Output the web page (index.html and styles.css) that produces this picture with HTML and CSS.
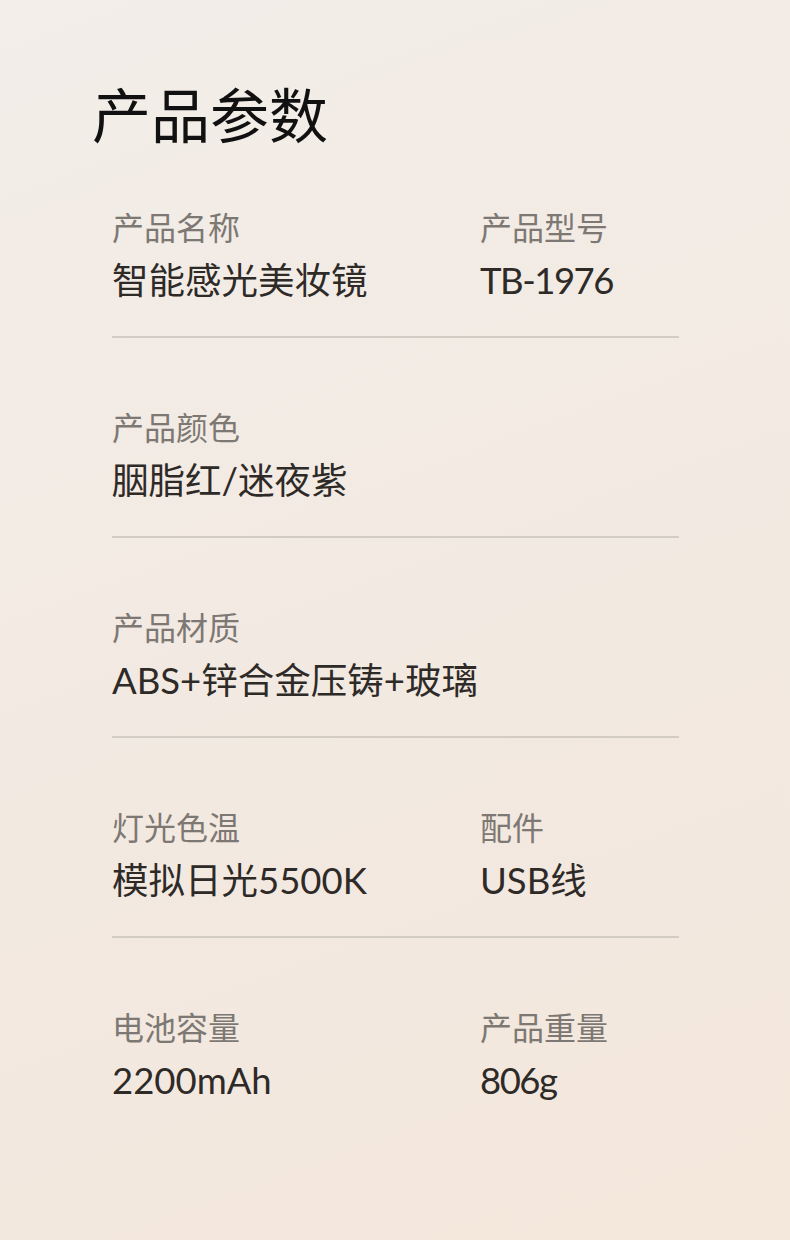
FILE: index.html
```html
<!DOCTYPE html>
<html lang="zh-CN">
<head>
    <meta charset="UTF-8">
    <meta name="viewport" content="width=device-width, initial-scale=1.0">
    <title>产品参数</title>
    <link rel="stylesheet" href="styles.css">
</head>
<body>
<div id="page">
    <h1 class="title">产品参数</h1>

    <div class="specs">
        <div class="row">
            <div class="item">
                <div class="label">产品名称</div>
                <div class="value">智能感光美妆镜</div>
            </div>
            <div class="item">
                <div class="label">产品型号</div>
                <div class="value tight">TB-1976</div>
            </div>
        </div>

        <div class="row">
            <div class="item">
                <div class="label">产品颜色</div>
                <div class="value">胭脂红/迷夜紫</div>
            </div>
        </div>

        <div class="row">
            <div class="item wide">
                <div class="label">产品材质</div>
                <div class="value">ABS+锌合金压铸+玻璃</div>
            </div>
        </div>

        <div class="row">
            <div class="item">
                <div class="label">灯光色温</div>
                <div class="value">模拟日光5500K</div>
            </div>
            <div class="item">
                <div class="label">配件</div>
                <div class="value">USB线</div>
            </div>
        </div>

        <div class="row last">
            <div class="item">
                <div class="label">电池容量</div>
                <div class="value">2200mAh</div>
            </div>
            <div class="item">
                <div class="label">产品重量</div>
                <div class="value tight">806g</div>
            </div>
        </div>
    </div>
</div>
</body>
</html>
```

FILE: styles.css
```css
html,body{
    margin:0;
    padding:0;
}
body{
    width:790px;
    height:1240px;
    background: linear-gradient(160deg, #f3eee9 0%, #f2e9e1 55%, #f4e7dc 100%);
    font-family: Lato, "Noto Sans CJK SC", sans-serif;
    overflow:hidden;
}
#page{
    padding:83px 0 0 0;
}
.title{
    margin:0 0 0 92px;
    font-size:59px;
    line-height:59px;
    font-weight:400;
    color:#111;
    font-family:"Noto Sans CJK SC", sans-serif;
}
.specs{
    margin:70px 0 0 112px;
    width:567px;
}
.row{
    display:grid;
    grid-template-columns: 368px 1fr;
    padding:0 0 38px 0;
    margin-bottom:74px;
    border-bottom:2px solid #d3ccc5;
}
.row.last{
    border-bottom:none;
}
.label{
    font-size:32px;
    line-height:32px;
    color:#7d7873;
}
.value{
    margin-top:18px;
    font-size:36.5px;
    line-height:36px;
    color:#2e2a27;
}
.tight{
    letter-spacing:-1.5px;
}
.wide{
    grid-column: 1 / 3;
}
```
